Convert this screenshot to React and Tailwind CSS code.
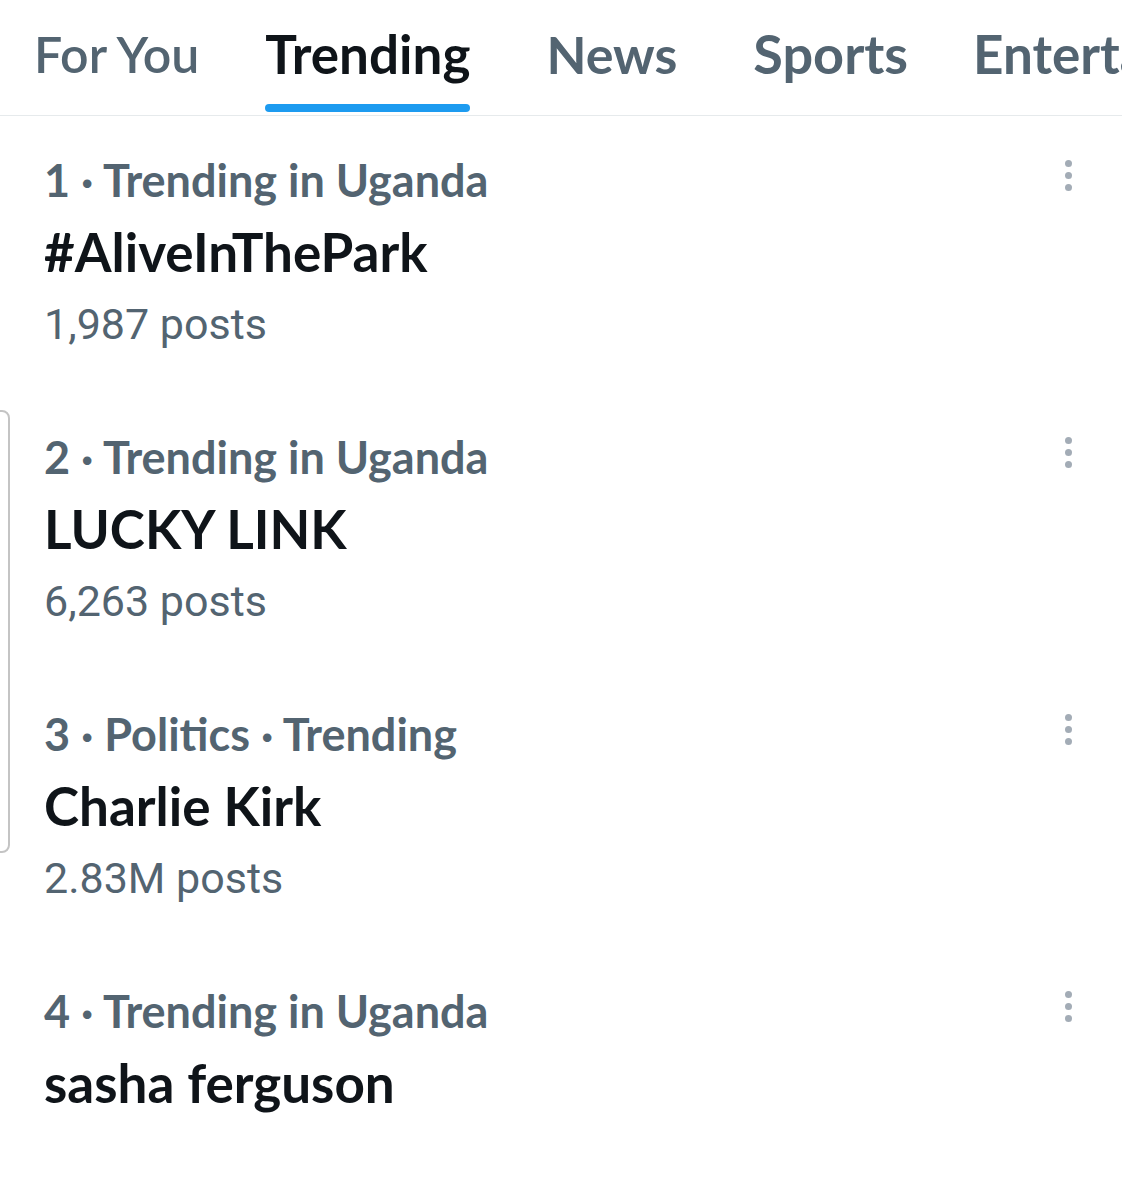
const tabs = [
    { label: "For You", active: false, cls: "ml-[34px] text-[50px] font-semibold" },
    { label: "Trending", active: true, cls: "ml-[66px] text-[53px] font-bold" },
    { label: "News", active: false, cls: "ml-[76px] text-[52px] font-bold" },
    { label: "Sports", active: false, cls: "ml-[76px] text-[54px] font-bold" },
    { label: "Entertainment", active: false, cls: "ml-[65px] text-[53px] font-bold" },
];

const trends = [
    { meta: "1 · Trending in Uganda", title: "#AliveInThePark", posts: "1,987 posts" },
    { meta: "2 · Trending in Uganda", title: "LUCKY LINK", posts: "6,263 posts" },
    { meta: "3 · Politics · Trending", title: "Charlie Kirk", posts: "2.83M posts" },
    { meta: "4 · Trending in Uganda", title: "sasha ferguson", posts: null },
];

function Dots() {
    return (
        <div className="flex flex-col items-center gap-[5px] pt-[16px]">
            <span className="block w-[7px] h-[7px] rounded-full bg-[#a3acb6]" />
            <span className="block w-[7px] h-[7px] rounded-full bg-[#a3acb6]" />
            <span className="block w-[7px] h-[7px] rounded-full bg-[#a3acb6]" />
        </div>
    );
}

function TrendRow({ trend }) {
    return (
        <div className="flex justify-between pl-[44px] pr-[50px] pt-[28px] h-[277px]">
            <div className="flex flex-col whitespace-nowrap">
                <div className="text-[45px] leading-[72px] font-bold text-[#536471]">{trend.meta}</div>
                <div className="text-[53px] leading-[72px] font-bold text-[#0f1419]">{trend.title}</div>
                {trend.posts && (
                    <div className="text-[43px] leading-[72px] text-[#536471] font-['Roboto',sans-serif]">
                        {trend.posts}
                    </div>
                )}
            </div>
            <Dots />
        </div>
    );
}

export default function App() {
    return (
        <div className="relative w-[1122px] h-[1191px] bg-white overflow-hidden font-['Lato','Noto_Sans',sans-serif]">
            {/* Tabs */}
            <div className="flex h-[116px] border-b border-[#e6eaec] whitespace-nowrap overflow-hidden">
                {tabs.map((tab, i) => (
                    <div key={i} className={"relative flex flex-col shrink-0 " + tab.cls}>
                        <span
                            className={
                                "pt-[20px] leading-[68px] " +
                                (tab.active ? "text-[#0f1419]" : "text-[#536471]")
                            }
                        >
                            {tab.label}
                        </span>
                        {tab.active && (
                            <span className="absolute left-0 right-0 bottom-[3px] h-[8px] rounded-full bg-[#1d9bf0]" />
                        )}
                    </div>
                ))}
            </div>

            {/* Trends */}
            <div className="flex flex-col">
                {trends.map((trend, i) => (
                    <TrendRow key={i} trend={trend} />
                ))}
            </div>

            {/* scroll bracket on the left edge */}
            <div className="absolute left-[-10px] top-[410px] w-[20px] h-[443px] border-[2px] border-[#c4c4c4] rounded-r-[8px]" />
        </div>
    );
}
